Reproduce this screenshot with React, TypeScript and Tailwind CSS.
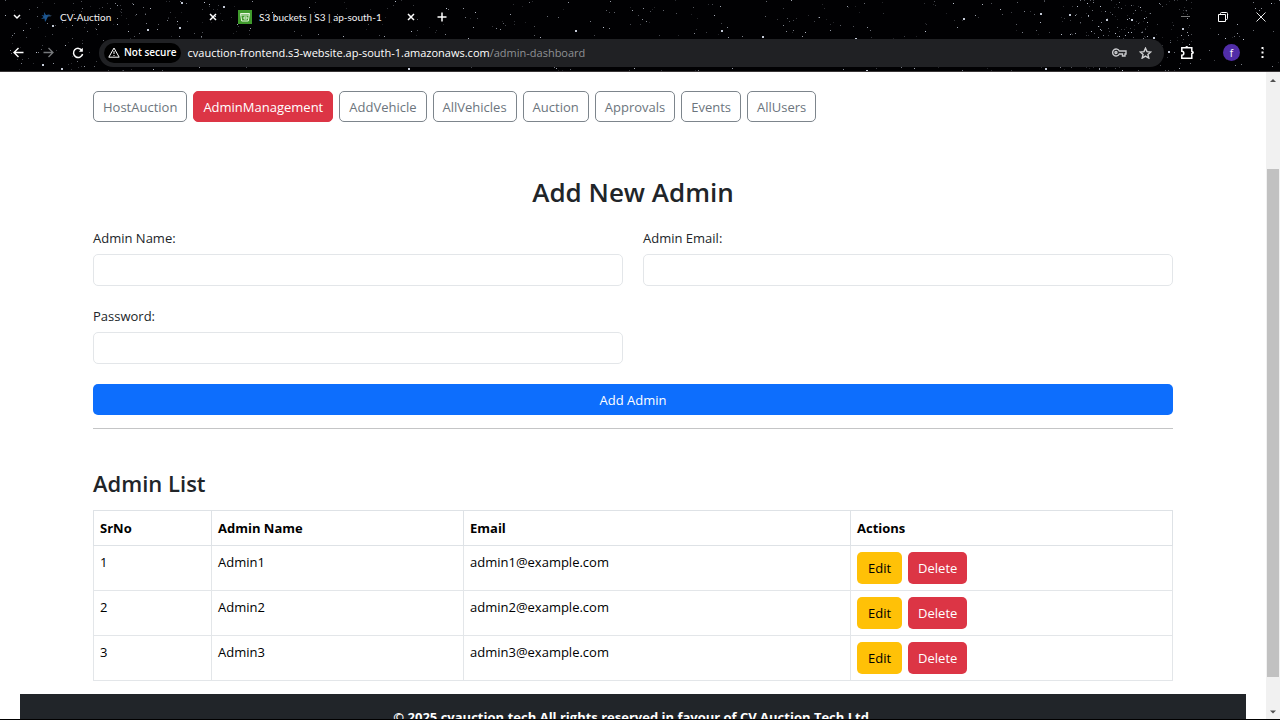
import type { ReactNode } from "react";

const tabs = ["HostAuction", "AdminManagement", "AddVehicle", "AllVehicles", "Auction", "Approvals", "Events", "AllUsers"];
const admins = [1, 2, 3].map((n) => ({ id: n, name: `Admin${n}`, email: `admin${n}@example.com` }));

type Star = { x: number; y: number; size: number; light: number };

function makeStars(): Star[] {
  let seed = 4217;
  const next = () => {
    seed = (seed * 1103515245 + 12345) % 2147483648;
    return seed / 2147483648;
  };
  const stars: Star[] = [];
  const add = (left: number, width: number, count: number) => {
    for (let i = 0; i < count; i++) {
      const bright = next();
      stars.push({
        x: Math.floor(left + next() * width),
        y: Math.floor(next() * 71),
        size: bright > 0.97 ? 2 : 1,
        light: 0.15 + bright * bright * 0.75,
      });
    }
  };
  add(0, 1280, 560);
  add(20, 230, 90);
  add(1060, 130, 200);
  return stars;
}

const stars = makeStars();

function Starfield() {
  return (
    <svg className="absolute inset-0 h-full w-full" viewBox="0 0 1280 71" preserveAspectRatio="xMinYMin slice" aria-hidden="true">
      <rect width="1280" height="71" fill="#010103" />
      {stars.map((s, i) => (
        <rect key={i} x={s.x} y={s.y} width={s.size} height={s.size} fill="#dfe6f5" opacity={s.light} />
      ))}
    </svg>
  );
}

function IconButton({ label, className, children }: { label: string; className: string; children: ReactNode }) {
  return (
    <button type="button" aria-label={label} className={`flex h-6 shrink-0 items-center justify-center ${className}`}>
      {children}
    </button>
  );
}

function CloseIcon() {
  return (
    <svg width="8" height="8" viewBox="0 0 8 8" fill="none" stroke="#fff" strokeWidth="1.5">
      <path d="M1 1l6 6M7 1L1 7" />
    </svg>
  );
}

function TabStrip() {
  return (
    <div className="flex h-[34px] items-center font-['Lato','Open_Sans',sans-serif] text-[10px] text-[#f2f2f4]">
      <IconButton label="Search tabs" className="ml-1 w-[26px]">
        <svg width="8" height="6" viewBox="0 0 8 6" fill="none" stroke="#fff" strokeWidth="1.5">
          <path d="M1 1l3 3 3-3" />
        </svg>
      </IconButton>
      <div className="ml-[10px] flex w-[181px] items-center">
        <svg className="shrink-0" width="13" height="12" viewBox="0 0 13 12">
          <path d="M4 1l2 3 3-.6 2 1.2-3 1L6 9.500 5 11 4.500 7.600 1 8l2.500-2L1.500 4l2.700.4z" fill="#1c5590" />
          <path d="M8 4.500h4l-1.500 1H8z" fill="#33465c" />
        </svg>
        <span className="ml-[7px] flex-1">CV-Auction</span>
        <IconButton label="Close CV-Auction" className="w-4"><CloseIcon /></IconButton>
      </div>
      <div className="ml-[17px] flex w-[181px] items-center">
        <svg className="shrink-0" width="14" height="14" viewBox="0 0 14 14" fill="none" stroke="#e4f5dc">
          <rect width="14" height="14" fill="#3f9a2c" stroke="none" />
          <path d="M2.500 3.500h9l-1.200 7.500H3.700zM2.700 5h8.500M6 7h3v2H6z" />
        </svg>
        <span className="ml-[7px] flex-1 whitespace-nowrap">S3 buckets | S3 | ap-south-1</span>
        <IconButton label="Close S3 buckets" className="w-4"><CloseIcon /></IconButton>
      </div>
      <IconButton label="New tab" className="ml-[13px] w-5">
        <svg width="10" height="10" viewBox="0 0 10 10" stroke="#fff" strokeWidth="1.500">
          <path d="M5 .5v9M.5 5h9" />
        </svg>
      </IconButton>
      <div className="ml-auto flex">
        <IconButton label="Minimize" className="w-[38px]">
          <svg width="9" height="9" viewBox="0 0 9 9" stroke="#777"><path d="M0 3.500h9" /></svg>
        </IconButton>
        <IconButton label="Restore" className="w-[38px]">
          <svg width="10" height="10" viewBox="0 0 10 10" fill="none" stroke="#fff">
            <path d="M.5 2.500h7v7h-7zM2.500 2V1.500a1 1 0 0 1 1-1h5a1 1 0 0 1 1 1v5a1 1 0 0 1-1 1H8" />
          </svg>
        </IconButton>
        <IconButton label="Close window" className="w-[38px]">
          <svg width="10" height="10" viewBox="0 0 10 10" stroke="#e8e8e8"><path d="M.5.5l9 9M9.500.5l-9 9" /></svg>
        </IconButton>
      </div>
    </div>
  );
}

function Toolbar() {
  return (
    <div className="flex h-[37px] items-center pl-[3px]">
      <IconButton label="Back" className="w-[30px]">
        <svg width="11" height="11" viewBox="0 0 11 11" fill="none" stroke="#fff" strokeWidth="1.400"><path d="M10.500 5.500H1M5.500 1L1 5.500 5.500 10" /></svg>
      </IconButton>
      <IconButton label="Forward" className="w-[30px]">
        <svg width="11" height="11" viewBox="0 0 11 11" fill="none" stroke="#77797c" strokeWidth="1.300"><path d="M.5 5.500H10M5.500 1L10 5.500 5.500 10" /></svg>
      </IconButton>
      <IconButton label="Reload" className="w-[30px]">
        <svg width="12" height="12" viewBox="0 0 12 12" fill="none" stroke="#fff" strokeWidth="1.500">
          <path d="M10 3.500A4.600 4.600 0 1 0 10.600 7" />
          <path d="M10.800.8v4H6.800z" fill="#fff" stroke="none" />
        </svg>
      </IconButton>
      <div className="ml-[6px] flex h-7 flex-1 items-center rounded-full bg-[#202124] pr-[13px] pl-[5px]">
        <button type="button" className="flex h-5 items-center gap-1 rounded-full bg-black px-1 text-[10px] font-semibold whitespace-nowrap text-white">
          <svg width="12" height="11" viewBox="0 0 12 11" fill="none" stroke="#fff">
            <path d="M6 1L11.200 10.200H.8zM6 4v3M6 8v1" />
          </svg>
          Not secure
        </button>
        <a href="#url" className="ml-[7px] flex-1 pt-px text-[11px] whitespace-nowrap text-white">
          cvauction-frontend.s3-website.ap-south-1.amazonaws.com<span className="text-[#8f9194]">/admin-dashboard</span>
        </a>
        <IconButton label="Passwords" className="w-[26px]">
          <svg width="15" height="9" viewBox="0 0 15 9" fill="none" stroke="#c9cacd" strokeWidth="1.400">
            <path d="M7.300 3H14v3h-1v2h-2.500V6H7.300A3.500 3.500 0 1 1 7.300 3z" />
            <circle cx="4" cy="4.500" r="1" />
          </svg>
        </IconButton>
        <IconButton label="Bookmark" className="-mr-[7px] w-[26px]">
          <svg width="13" height="12" viewBox="0 0 13 12" fill="none" stroke="#d0d1d3" strokeWidth="1.400">
            <path d="M6.500 1.200l1.500 3.400 3.700.4-2.800 2.400.9 3.700-3.300-2-3.300 2 .9-3.700L1.300 5 5 4.600z" />
          </svg>
        </IconButton>
      </div>
      <IconButton label="Extensions" className="ml-[9px] w-[28px]">
        <svg width="15" height="15" viewBox="0 0 15 15" fill="none" stroke="#fff" strokeWidth="1.500">
          <path d="M1.800 2.800h10v3.500l1 .8v.8l-1 .8v4.500h-10v-3a2 2 0 0 0 0-4z" />
          <path d="M5.200 2.500a1.600 1.600 0 0 1 3.200 0zM12.200 6a1.500 1.500 0 0 1 0 3z" fill="#fff" stroke="none" />
        </svg>
      </IconButton>
      <button type="button" aria-label="Profile f" className="ml-[22px] h-[17px] w-[17px] rounded-full bg-[#512da8] text-center text-[10px] leading-4 text-white">f</button>
      <IconButton label="Browser menu" className="mr-2 ml-[12px] w-5">
        <svg width="3" height="13" viewBox="0 0 3 13" fill="#fff"><path d="M.5 1h2v2h-2zM.5 5.500h2v2h-2zM.5 10h2v2h-2z" /></svg>
      </IconButton>
    </div>
  );
}

function Field({ id, label, type }: { id: string; label: string; type: string }) {
  return (
    <div>
      <label htmlFor={id} className="block leading-5">{label}</label>
      <input id={id} type={type} className="mt-[6px] block h-8 w-full rounded-[5px] border border-[#e3e6e9] bg-white px-[10px]" />
    </div>
  );
}

function ScrollRail() {
  return (
    <div className="flex w-[14px] shrink-0 flex-col items-center bg-[#f1f1f1]" aria-hidden="true">
      <svg className="shrink-0" width="14" height="15" viewBox="0 0 14 15"><path d="M7 7l3 3H4z" fill="#505050" /></svg>
      <div className="flex-[82]" />
      <div className="w-3 flex-[509] bg-[#c1c1c1]" />
      <div className="flex-[27]" />
      <svg className="shrink-0" width="14" height="15" viewBox="0 0 14 15"><path d="M7 9.500L4 6.500h6z" fill="#505050" /></svg>
    </div>
  );
}

export default function App() {
  return (
    <div className="flex h-screen flex-col overflow-hidden border-b border-black bg-white font-['Open_Sans','Noto_Sans',sans-serif] text-[13px] text-[#212529]">
      <header className="relative shrink-0 border-b border-[#3a3638] bg-black">
        <Starfield />
        <div className="relative">
          <TabStrip />
          <Toolbar />
        </div>
      </header>
      <div className="flex min-h-0 flex-1">
        <div className="min-w-0 flex-1 overflow-hidden">
          <main className="mx-auto max-w-[1080px] pt-[19px]">
            <nav className="flex gap-[6px]">
              {tabs.map((tab) => (
                <button
                  key={tab}
                  type="button"
                  className={
                    tab === "AdminManagement"
                      ? "h-[31px] rounded-[5px] border border-[#dc3545] bg-[#dc3545] px-[9px] pt-[2px] text-white"
                      : "h-[31px] rounded-[5px] border border-[#7d858c] px-[9px] pt-[2px] text-[#6c757d]"
                  }
                >
                  {tab}
                </button>
              ))}
            </nav>
            <h2 className="mt-[54px] text-center text-[26px] leading-8 font-semibold">Add New Admin</h2>
            <form className="mt-5 border-b border-[#c4c5c6] pb-[13px]" onSubmit={(e) => e.preventDefault()}>
              <div className="grid grid-cols-2 gap-x-5 gap-y-5">
                <Field id="admin-name" label="Admin Name:" type="text" />
                <Field id="admin-email" label="Admin Email:" type="email" />
                <Field id="admin-password" label="Password:" type="password" />
              </div>
              <button type="submit" className="mt-5 h-[31px] w-full rounded-[5px] bg-[#0d6efd] pt-[2px] text-white">Add Admin</button>
            </form>
            <h3 className="mt-[39px] text-[22px] leading-[30px] font-semibold">Admin List</h3>
            <table className="mt-3 w-full table-fixed border-collapse text-left text-black">
              <colgroup>
                <col className="w-[118px]" />
                <col className="w-[252px]" />
                <col className="w-[387px]" />
                <col />
              </colgroup>
              <thead>
                <tr className="h-[35px]">
                  {["SrNo", "Admin Name", "Email", "Actions"].map((title) => (
                    <th key={title} className="border border-[#dee2e6] px-[6px] pt-px font-bold">{title}</th>
                  ))}
                </tr>
              </thead>
              <tbody>
                {admins.map((admin) => (
                  <tr key={admin.id} className="h-[45px] align-top">
                    <td className="border border-[#e3e6e9] px-[6px] pt-[7px]">{admin.id}</td>
                    <td className="border border-[#e3e6e9] px-[6px] pt-[7px]">{admin.name}</td>
                    <td className="border border-[#e3e6e9] px-[6px] pt-[7px]">{admin.email}</td>
                    <td className="border border-[#e3e6e9] px-[6px] py-[6px]">
                      <div className="flex gap-[6px]">
                        <button type="button" className="h-8 rounded-[5px] bg-[#ffc107] px-[11px] pt-[2px]">Edit</button>
                        <button type="button" className="h-8 rounded-[5px] bg-[#dc3545] px-[10px] pt-[2px] text-white">Delete</button>
                      </div>
                    </td>
                  </tr>
                ))}
              </tbody>
            </table>
          </main>
          <footer className="mx-5 mt-[13px] bg-[#212529] py-[14px] text-center font-bold text-white">
            © 2025 cvauction.tech All rights reserved in favour of CV Auction Tech Ltd.
          </footer>
        </div>
        <ScrollRail />
      </div>
    </div>
  );
}
